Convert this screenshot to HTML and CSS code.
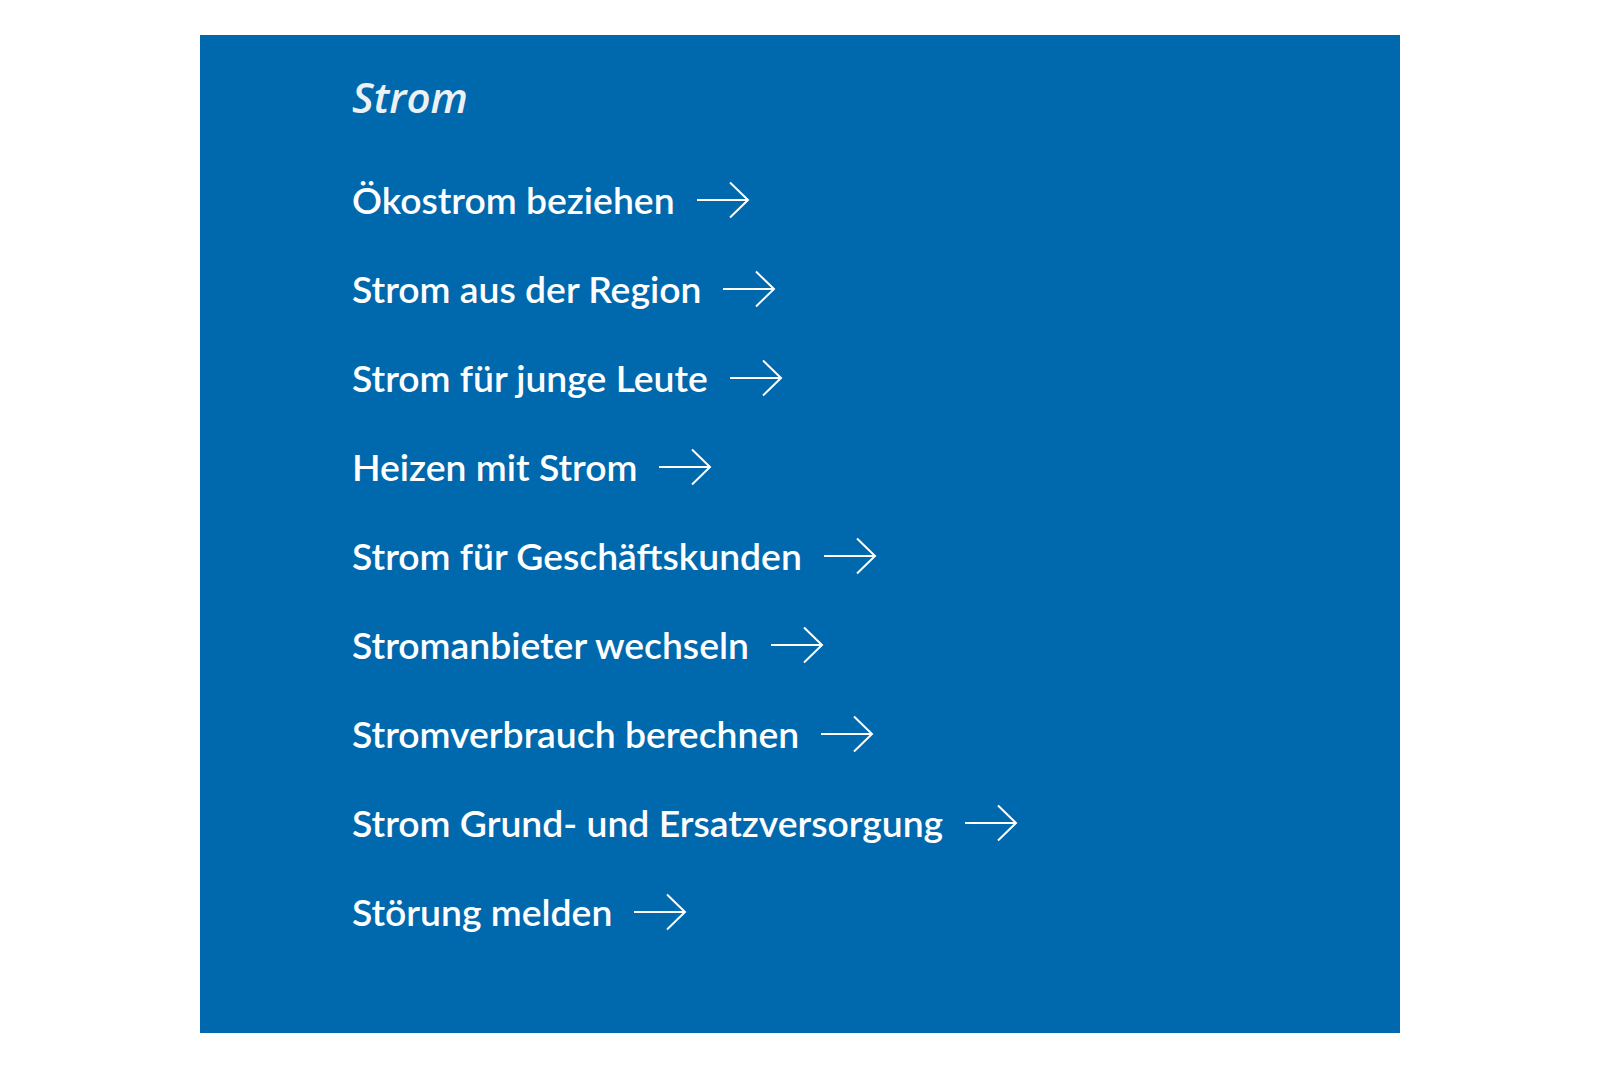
FILE: index.html
```html
<!DOCTYPE html>
<html lang="de">
<head>
<meta charset="utf-8">
<title>Strom</title>
<link rel="stylesheet" href="styles.css">
</head>
<body>
<section class="panel">
  <h2 class="panel-title">Strom</h2>
  <ul class="link-list">
    <li><a class="link" href="#">Ökostrom beziehen<svg class="arrow" viewBox="0 0 54 38"><path d="M1 19H52M34 1.5L52 19L34 36.5"/></svg></a></li>
    <li><a class="link" href="#">Strom aus der Region<svg class="arrow" viewBox="0 0 54 38"><path d="M1 19H52M34 1.5L52 19L34 36.5"/></svg></a></li>
    <li><a class="link" href="#">Strom für junge Leute<svg class="arrow" viewBox="0 0 54 38"><path d="M1 19H52M34 1.5L52 19L34 36.5"/></svg></a></li>
    <li><a class="link" href="#">Heizen mit Strom<svg class="arrow" viewBox="0 0 54 38"><path d="M1 19H52M34 1.5L52 19L34 36.5"/></svg></a></li>
    <li><a class="link" href="#">Strom für Geschäftskunden<svg class="arrow" viewBox="0 0 54 38"><path d="M1 19H52M34 1.5L52 19L34 36.5"/></svg></a></li>
    <li><a class="link" href="#">Stromanbieter wechseln<svg class="arrow" viewBox="0 0 54 38"><path d="M1 19H52M34 1.5L52 19L34 36.5"/></svg></a></li>
    <li><a class="link" href="#">Stromverbrauch berechnen<svg class="arrow" viewBox="0 0 54 38"><path d="M1 19H52M34 1.5L52 19L34 36.5"/></svg></a></li>
    <li><a class="link" href="#">Strom Grund- und Ersatzversorgung<svg class="arrow" viewBox="0 0 54 38"><path d="M1 19H52M34 1.5L52 19L34 36.5"/></svg></a></li>
    <li><a class="link" href="#">Störung melden<svg class="arrow" viewBox="0 0 54 38"><path d="M1 19H52M34 1.5L52 19L34 36.5"/></svg></a></li>
  </ul>
</section>
</body>
</html>
```

FILE: styles.css
```css
html, body {
  margin: 0;
  padding: 0;
  background: #ffffff;
}

.panel {
  box-sizing: border-box;
  width: 1200px;
  height: 998px;
  margin: 35px 0 0 200px;
  padding: 38px 0 0 152px;
  background: #0069ae;
  color: #ffffff;
  font-family: "Lato", "Liberation Sans", sans-serif;
}

.panel-title {
  margin: 0;
  font-family: "Open Sans", "Liberation Sans", sans-serif;
  font-style: italic;
  font-weight: 600;
  font-size: 42px;
  line-height: 48px;
  color: #eef1f4;
}

.link-list {
  list-style: none;
  margin: 34px 0 0;
  padding: 0;
}

.link-list li {
  height: 89px;
  display: flex;
  align-items: center;
}

.link {
  display: inline-flex;
  align-items: center;
  gap: 21px;
  color: #ffffff;
  text-decoration: none;
  font-size: 37.3px;
  font-weight: 600;
  line-height: 89px;
}

.arrow {
  width: 54px;
  height: 38px;
  flex: none;
}

.arrow path {
  fill: none;
  stroke: #ffffff;
  stroke-width: 2;
}
```
